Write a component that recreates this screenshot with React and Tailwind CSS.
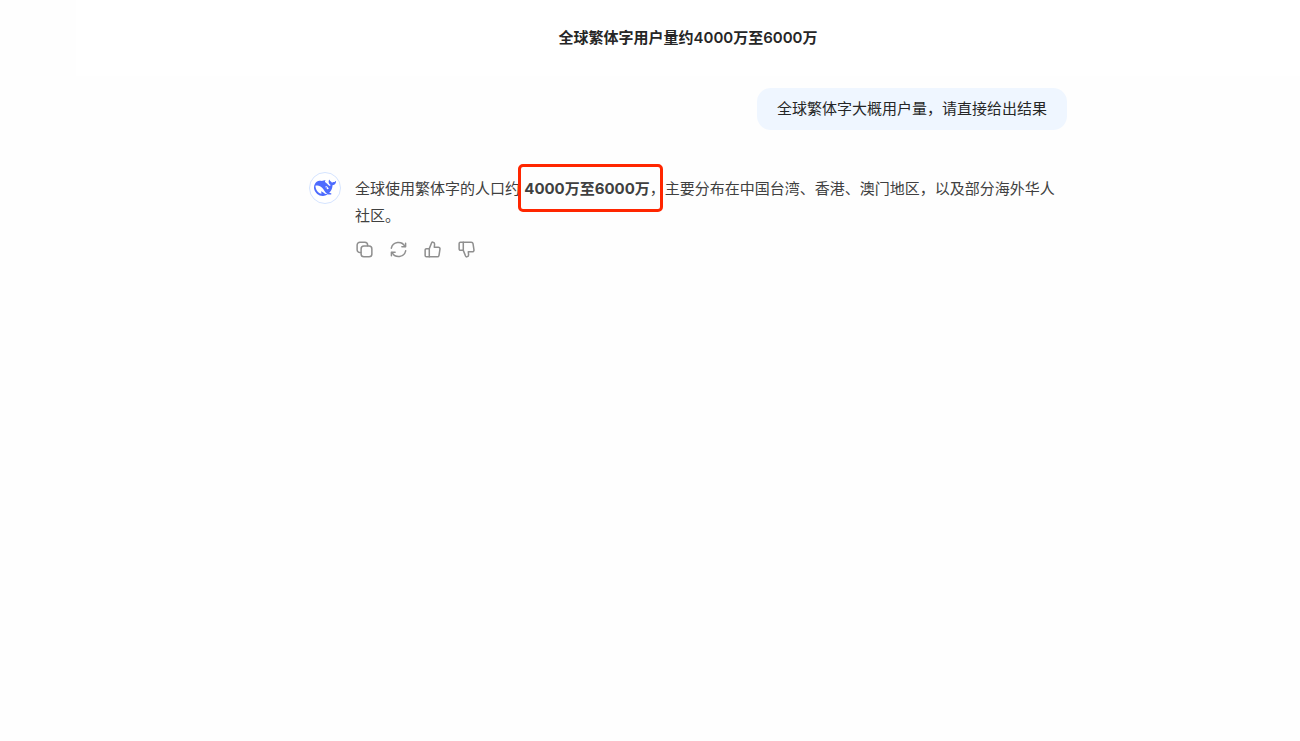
import React from "react";

function WhaleLogo() {
  return (
    <svg viewBox="0 0 24 24" className="size-[22px] fill-[#4d6bfe]" aria-hidden="true">
      <path d="M23.748 4.482c-.254-.124-.364.113-.512.234-.051.039-.094.09-.137.136-.372.397-.806.657-1.373.626-.829-.046-1.537.214-2.163.848-.133-.782-.575-1.248-1.247-1.548-.352-.156-.708-.311-.955-.65-.172-.241-.219-.51-.305-.774-.055-.16-.11-.323-.293-.35-.2-.031-.278.136-.356.276-.313.572-.434 1.202-.422 1.84.027 1.436.633 2.58 1.838 3.393.137.093.172.187.129.323-.082.28-.18.552-.266.833-.055.179-.137.217-.329.14a5.526 5.526 0 01-1.736-1.18c-.857-.828-1.631-1.742-2.597-2.458a11.365 11.365 0 00-.689-.471c-.985-.957.13-1.743.388-1.836.27-.098.093-.432-.779-.428-.872.004-1.67.295-2.687.684a3.055 3.055 0 01-.465.137 9.597 9.597 0 00-2.883-.102c-1.885.21-3.39 1.102-4.497 2.623C.082 8.606-.231 10.684.152 12.85c.403 2.284 1.569 4.175 3.36 5.653 1.858 1.533 3.997 2.284 6.438 2.14 1.482-.085 3.133-.284 4.994-1.86.47.234.962.327 1.78.397.63.059 1.236-.03 1.705-.128.735-.156.684-.837.419-.961-2.155-1.004-1.682-.595-2.113-.926 1.096-1.296 2.746-2.642 3.392-7.003.05-.347.007-.565 0-.845-.004-.17.035-.237.23-.256a4.173 4.173 0 001.545-.475c1.396-.763 1.96-2.015 2.093-3.517.02-.23-.004-.467-.247-.588zM11.581 18c-2.089-1.642-3.102-2.183-3.52-2.16-.392.024-.321.471-.235.763.09.288.207.486.371.739.114.167.192.416-.113.603-.673.416-1.842-.14-1.897-.167-1.361-.802-2.5-1.86-3.301-3.307-.774-1.393-1.224-2.887-1.298-4.482-.02-.386.093-.522.477-.592a4.696 4.696 0 011.529-.039c2.132.312 3.946 1.265 5.468 2.774.868.86 1.525 1.887 2.202 2.891.72 1.066 1.494 2.082 2.48 2.914.348.292.625.514.891.677-.802.09-2.14.11-3.054-.614zm1-6.44a.306.306 0 01.415-.287.302.302 0 01.2.288.306.306 0 01-.31.307.303.303 0 01-.304-.308zm3.11 1.596c-.2.081-.399.151-.59.16a1.245 1.245 0 01-.798-.254c-.274-.23-.47-.358-.552-.758a1.73 1.73 0 01.016-.588c.07-.327-.008-.537-.239-.727-.187-.156-.426-.199-.688-.199a.559.559 0 01-.254-.078c-.11-.054-.2-.19-.114-.358.028-.054.16-.186.192-.21.356-.202.767-.136 1.146.016.352.144.618.408 1.001.782.391.451.462.576.685.914.176.265.336.537.445.848.067.195-.019.354-.25.452z" />
    </svg>
  );
}

function ActionButton({ label, children }) {
  return (
    <button type="button" aria-label={label} className="size-[17px] cursor-pointer text-[#8f8f8f]">
      <svg
        viewBox="0 0 18 18"
        className="size-[17px]"
        fill="none"
        stroke="currentColor"
        strokeWidth="1.6"
        strokeLinecap="round"
        strokeLinejoin="round"
        aria-hidden="true"
      >
        {children}
      </svg>
    </button>
  );
}

function ThumbShape() {
  return (
    <>
      <path d="M1.200 9.500a1.400 1.400 0 0 1 1.400-1.400h3v8.700h-3a1.400 1.400 0 0 1-1.400-1.400z" />
      <path d="M5.600 8.100 8 2.100c.3-.7.8-1 1.400-.9 1.200.2 1.900 1.100 1.800 2.200l-.3 3.200h4.200c1.200 0 2 1 1.800 2.100l-1 6.400a2 2 0 0 1-2 1.700H5.600" />
    </>
  );
}

export default function App() {
  return (
    <div className="min-h-screen bg-[#fefefe] pl-[76px] font-['Inter','Noto_Sans_CJK_SC',sans-serif] text-[15px] text-[#262626]">
      <header className="flex h-[76px] items-center justify-center bg-white">
        <h1 className="font-semibold">全球繁体字用户量约4000万至6000万</h1>
      </header>

      <main className="mx-auto flex max-w-[758px] flex-col pt-3">
        <div className="self-end rounded-[14px] bg-[#eff6ff] px-5 py-2 leading-[26px]">
          全球繁体字大概用户量，请直接给出结果
        </div>

        <article className="mt-[42px] flex gap-[14px]">
          <div className="flex size-8 shrink-0 items-center justify-center rounded-full border border-[#d5e4ff] bg-white">
            <WhaleLogo />
          </div>
          <div className="min-w-0 grow">
            <p className="pt-[3px] leading-[27px] text-[#404040]">
              全球使用繁体字的人口约{" "}
              <strong className="relative inline-block font-bold">
                4000万至6000万
                <span className="pointer-events-none absolute -top-[11px] -right-[13px] -bottom-[10px] -left-[6px] rounded-[5px] border-3 border-[#ff2600]" />
              </strong>
              ，主要分布在中国台湾、香港、澳门地区，以及部分海外华人社区。
            </p>
            <div className="mt-3 flex gap-[17px] pl-px">
              <ActionButton label="复制">
                <path d="M5 12.300H4.200a3 3 0 0 1-3-3V4.200a3 3 0 0 1 3-3h5.100a3 3 0 0 1 3 3V5" />
                <rect x="5.400" y="5.400" width="11.400" height="11.400" rx="3" />
              </ActionButton>
              <ActionButton label="重新生成">
                <path d="M1.400 7.600A7.700 7.700 0 0 1 15.800 5.800" />
                <path d="M16.500 2.300v3.900h-3.900" />
                <path d="M16.600 10.400A7.700 7.700 0 0 1 2.200 12.200" />
                <path d="M1.500 15.700v-3.900h3.900" />
              </ActionButton>
              <ActionButton label="喜欢">
                <ThumbShape />
              </ActionButton>
              <ActionButton label="不喜欢">
                <g transform="matrix(1 0 0 -1 0 18)">
                  <ThumbShape />
                </g>
              </ActionButton>
            </div>
          </div>
        </article>
      </main>
    </div>
  );
}
